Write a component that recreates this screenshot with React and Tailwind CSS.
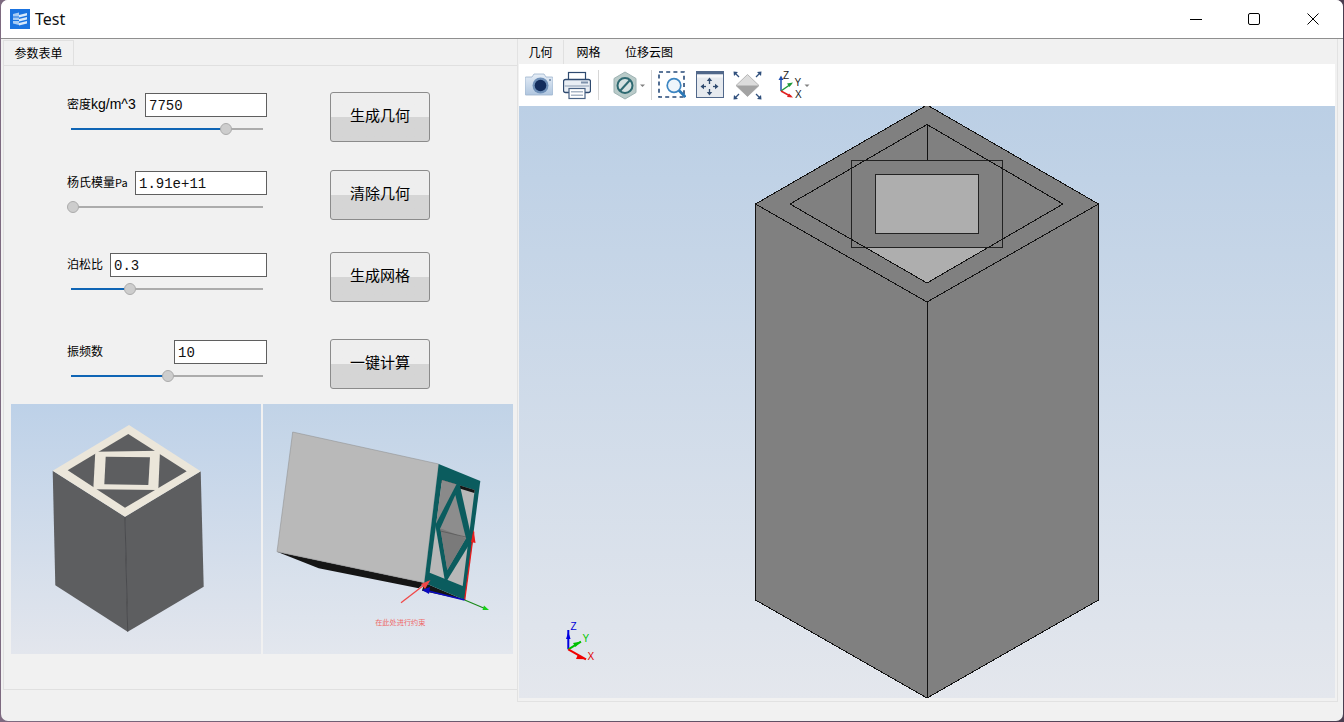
import React from "react";

const cjk = { fontFamily: '"Noto Sans CJK SC", "Liberation Sans", sans-serif' };
const latin = { fontFamily: '"Liberation Sans", sans-serif' };

function Slider({ pct }) {
  return (
    <div className="relative mt-[6px] ml-[4px] h-[12px] w-[192px]">
      <div className="absolute left-0 top-[5px] h-[2px] w-full bg-[#acacac]" />
      <div className="absolute left-0 top-[5px] h-[2px] bg-[#0f65b5]" style={{ width: `${pct}px` }} />
      <div
        className="absolute top-0 h-[12px] w-[12px] rounded-full border border-[#acacac] bg-[#cdcdcd]"
        style={{ left: `${pct - 6}px` }}
      />
    </div>
  );
}

function Row({ label, inputW, value, pct, button, mt }) {
  return (
    <div className={`flex pl-[63px] ${mt}`}>
      <div className="mt-[1px] w-[200px]">
        <div className="flex h-[24px] items-center justify-between">
          <span className="pb-[2px] text-[12px] leading-[16px] text-black" style={cjk}>
            {label}
          </span>
          <div
            className="flex h-[24px] items-center border border-[#5f5f5f] bg-white pt-[2px] pl-[3px] text-[14px] text-[#111]"
            style={{ width: inputW, fontFamily: '"Liberation Mono", monospace' }}
          >
            {value}
          </div>
        </div>
        <Slider pct={pct} />
      </div>
      <div
        className="ml-[63px] flex h-[50px] w-[100px] items-center justify-center rounded-[3px] border border-[#8b8b8b] bg-linear-to-b from-[#eeeeee] from-50% to-[#d5d5d5] to-50% pb-[3px] text-[15px] text-black"
        style={cjk}
      >
        {button}
      </div>
    </div>
  );
}

function Thumb1() {
  return (
    <svg viewBox="11 404 250 250" className="block h-full w-full">
      <polygon points="52.7,470.7 125,516.7 127.7,631.7 55.3,585.3" fill="#5d5e60" />
      <polygon points="125,516.7 200.7,471.3 203.7,586.7 127.7,631.7" fill="#5d5e60" />
      <line x1="125" y1="516.7" x2="127.7" y2="631.7" stroke="#3d3e40" strokeWidth="0.8" />
      <polygon points="129,425 200.7,471.3 125,516.7 52.7,470.7" fill="#ebe6da" />
      <polygon points="128.3,434 186.7,471.3 125,507.7 67.7,470.3" fill="#5d5e60" />
      <polygon points="95.3,451.7 160,450.7 158.3,490 93.3,489.3" fill="#ebe6da" />
      <polygon points="105.7,456.7 150,457.3 148.3,485 104.3,484.3" fill="#5d5e60" />
    </svg>
  );
}

function Thumb2() {
  return (
    <svg viewBox="263 404 250 250" className="block h-full w-full">
      <polygon points="277,551.7 318.7,568.3 418.7,588.3 424.3,582.7" fill="#151515" />
      <polygon points="292.7,432 438.7,464 424.3,582.7 277,551.7" fill="#b9b9b9" stroke="#8a8a8a" strokeWidth="0.5" />
      <polygon points="424.3,582.7 464.7,600 422,590.7" fill="#151515" />
      <polygon points="438.7,464 480.3,481 464.7,600 424.3,582.7" fill="#0b5c5e" />
      <polygon points="442,480 474.7,490 462.7,586 429.7,572.7" fill="#b8b8b8" />
      <polygon points="442,480 474.7,490 474.3,493 441.6,483" fill="#151515" />
      <polygon points="442,480 458.7,485 436,525 429.7,572.7" fill="#8a8a8a" />
      <polygon points="458.7,480 472,540 445.3,583.3 435.3,525" fill="#0b5c5e" />
      <polygon points="455.3,495 466,538.3 447.3,570 440.3,528.3" fill="#8d8d8d" />
      <polygon points="440.3,528.3 466,538.3 447.3,570" fill="#7a7a7a" />
      <line x1="440.3" y1="531" x2="466" y2="537" stroke="#444" strokeWidth="0.5" />
      <line x1="464.7" y1="600" x2="473.7" y2="531.7" stroke="#e81c1c" strokeWidth="1.3" />
      <polygon points="473.7,530 471,542 475.5,543" fill="#e81c1c" />
      <line x1="464.7" y1="600" x2="424" y2="590" stroke="#0a0ac0" strokeWidth="1.6" />
      <polygon points="422,590 430,587 429,594" fill="#0a0ac0" />
      <line x1="464.7" y1="600" x2="486" y2="609" stroke="#1a8a1a" strokeWidth="1.2" />
      <polygon points="489,610 484,605.5 482.5,610" fill="#18d018" />
      <line x1="401" y1="602.7" x2="428" y2="582" stroke="#f04848" strokeWidth="1.3" />
      <polygon points="430.5,580 421,584 425,589" fill="#f04848" />
      <text x="400.3" y="625" textAnchor="middle" fontSize="7.2" fill="#ee6a6a" style={cjk}>在此处进行约束</text>
    </svg>
  );
}

function Model() {
  return (
    <svg viewBox="519 106 816 592" className="block h-full w-full">
      <g stroke="#111" strokeWidth="1" shapeRendering="crispEdges">
        <polygon points="755.5,204 927,302 927,698 755.5,600" fill="#808080" />
        <polygon points="927,302 1098.5,204 1098.5,600 927,698" fill="#808080" />
        <polygon points="927,105 1098.5,204 927,302 755.5,204" fill="#808080" />
      </g>
      <polygon points="865,247 989,247 927,283" fill="#aeaeae" />
      <line x1="927" y1="124.5" x2="927" y2="160" stroke="#111" strokeWidth="1" shapeRendering="crispEdges" />
      <rect x="851.5" y="160.5" width="151" height="87" fill="#808080" stroke="#222" strokeWidth="1" shapeRendering="crispEdges" />
      <polygon points="927,124.5 1063,204 927,283 790,204" fill="none" stroke="#111" strokeWidth="1" shapeRendering="crispEdges" />
      <rect x="875.5" y="174.5" width="103" height="59" fill="#aeaeae" stroke="#222" strokeWidth="1" shapeRendering="crispEdges" />
      <line x1="568.3" y1="649.3" x2="568.3" y2="630" stroke="#0000e0" strokeWidth="2" />
      <polygon points="568.3,632 566,639 570.6,639" fill="#0000e0" />
      <line x1="568.3" y1="649.3" x2="581" y2="641.7" stroke="#00c000" strokeWidth="2" />
      <polygon points="581,641.5 573,643 575.5,647" fill="#00c000" />
      <line x1="568.3" y1="649.3" x2="586" y2="659.3" stroke="#f00000" strokeWidth="2" />
      <polygon points="586,659.3 578,654.5 576,659" fill="#f00000" />
      <text x="570.5" y="630" fontSize="10" fill="#0000d8" style={latin}>Z</text>
      <text x="582.5" y="642" fontSize="10" fill="#00c800" style={latin}>Y</text>
      <text x="587.5" y="660" fontSize="10" fill="#e00000" style={latin}>X</text>
    </svg>
  );
}

function Camera() {
  return (
    <svg viewBox="525 70 28 30" className="ml-[6px] h-[30px] w-[28px]">
      <defs>
        <linearGradient id="cam" x1="0" y1="0" x2="0" y2="1">
          <stop offset="0" stopColor="#e6eef7" />
          <stop offset="1" stopColor="#b0c6df" />
        </linearGradient>
      </defs>
      <path d="M526 77h6l2-3h10l2 3h6a1 1 0 0 1 1 1V94a1 1 0 0 1-1 1H526a1 1 0 0 1-1-1V78a1 1 0 0 1 1-1z" fill="url(#cam)" stroke="#9db2cb" strokeWidth="0.8" />
      <circle cx="540.5" cy="85.5" r="8" fill="#6f90b8" />
      <circle cx="540.5" cy="85.5" r="5.8" fill="#122c5c" />
      <circle cx="550" cy="80" r="1" fill="#6c84a5" />
    </svg>
  );
}

function Printer() {
  return (
    <svg viewBox="563 70 28 30" className="ml-[10px] h-[30px] w-[28px]">
      <rect x="568.5" y="72.5" width="17" height="8" fill="#fff" stroke="#2f4a6f" strokeWidth="1.2" />
      <rect x="563.5" y="79.5" width="27" height="13" rx="2" fill="#e9eef4" stroke="#2f4a6f" strokeWidth="1.3" />
      <rect x="564.5" y="85" width="25" height="2" fill="#b9c4d2" />
      <rect x="581" y="81.5" width="7" height="2" fill="#7f92ab" />
      <rect x="569" y="88.5" width="16" height="10" fill="#fff" stroke="#4a6385" strokeWidth="1.2" />
      <rect x="571" y="91" width="12" height="1.5" fill="#a9b6c6" />
      <rect x="571" y="94.5" width="12" height="1.5" fill="#a9b6c6" />
    </svg>
  );
}

function Sep() {
  return <div className="h-[30px] w-px bg-[#d6d6d6]" />;
}

function Arrow() {
  return <polygon points="0,0 5,0 2.5,2.5" fill="#808080" />;
}

function Hex() {
  return (
    <svg viewBox="613 70 33 30" className="ml-[14px] h-[30px] w-[33px]">
      <polygon points="625,72 636,78.5 636,92.5 625,99 614,92.5 614,78.5" fill="#b9cbc9" stroke="#9db2b2" strokeWidth="1" />
      <circle cx="625" cy="85.5" r="7.5" fill="#d7e2e2" stroke="#2f6a72" strokeWidth="2" />
      <line x1="620" y1="91" x2="630" y2="80" stroke="#2f6a72" strokeWidth="2" />
      <g transform="translate(640 84.5)"><Arrow /></g>
    </svg>
  );
}

function ZoomBox() {
  return (
    <svg viewBox="658 70 28 30" className="ml-[6px] h-[30px] w-[28px]">
      <rect x="659" y="72" width="25" height="25" fill="none" stroke="#274a78" strokeWidth="1.6" strokeDasharray="4 3.2" />
      <circle cx="674" cy="85.5" r="6.8" fill="#eef5fb" stroke="#3d86c2" strokeWidth="1.7" />
      <line x1="679" y1="90.5" x2="685.5" y2="97" stroke="#2a78b8" strokeWidth="2.8" />
    </svg>
  );
}

function PanBox() {
  const c = "#2f4a6f";
  return (
    <svg viewBox="696 70 28 30" className="ml-[10px] h-[30px] w-[28px]">
      <rect x="696.5" y="71.5" width="27" height="26" fill="#e6eaef" stroke="#51688a" strokeWidth="1" />
      <rect x="696" y="71" width="28" height="3.5" fill="#51688a" />
      <rect x="697" y="74.5" width="26" height="3" fill="#f6f7f9" />
      <g stroke={c} strokeWidth="1.3">
        <line x1="709.5" y1="80" x2="709.5" y2="84" />
        <line x1="709.5" y1="89" x2="709.5" y2="93" />
        <line x1="702" y1="86.5" x2="706" y2="86.5" />
        <line x1="713" y1="86.5" x2="717" y2="86.5" />
      </g>
      <g fill={c}>
        <polygon points="709.5,77.5 706.8,81 712.2,81" />
        <polygon points="709.5,95.5 706.8,92 712.2,92" />
        <polygon points="700.5,86.5 704,83.8 704,89.2" />
        <polygon points="718.5,86.5 715,83.8 715,89.2" />
      </g>
    </svg>
  );
}

function Fit() {
  const c = "#2f4f7c";
  return (
    <svg viewBox="733 70 29 30" className="ml-[9px] h-[30px] w-[29px]">
      <polygon points="747.5,74.5 759,85.5 747.5,96.5 736,85.5" fill="#dcdcdc" stroke="#a8a8a8" strokeWidth="0.8" />
      <polygon points="736,85.5 759,85.5 747.5,96.5" fill="#a3a3a3" />
      <g stroke={c} strokeWidth="1.3">
        <line x1="735" y1="73" x2="739" y2="77" />
        <line x1="760" y1="73" x2="756" y2="77" />
        <line x1="735" y1="98" x2="739" y2="94" />
        <line x1="760" y1="98" x2="756" y2="94" />
      </g>
      <g fill={c}>
        <polygon points="733.5,71.5 738,72 734,76" />
        <polygon points="761.5,71.5 757,72 761,76" />
        <polygon points="733.5,99.5 738,99 734,95" />
        <polygon points="761.5,99.5 757,99 761,95" />
      </g>
    </svg>
  );
}

function Axes() {
  return (
    <svg viewBox="778 70 32 30" className="ml-[16px] h-[30px] w-[32px] overflow-visible">
      <line x1="781" y1="91" x2="781" y2="78" stroke="#2050b0" strokeWidth="1.5" />
      <polygon points="781,75.5 778.5,80 783.5,80" fill="#2050b0" />
      <line x1="781" y1="91" x2="791" y2="84" stroke="#1f9a3a" strokeWidth="1.5" />
      <polygon points="793,82.5 787,83.5 789.5,87" fill="#1f9a3a" />
      <line x1="781" y1="91" x2="791" y2="96.5" stroke="#e02020" strokeWidth="1.5" />
      <polygon points="793,97.5 787,97 789,93.5" fill="#e02020" />
      <g fontSize="10" fill="#222" style={latin}>
        <text x="783" y="78.5">Z</text>
        <text x="794.5" y="86">Y</text>
        <text x="795" y="98">X</text>
      </g>
      <g transform="translate(804.5 84.5)"><Arrow /></g>
    </svg>
  );
}

export default function App() {
  return (
    <div className="h-[722px] w-[1344px] overflow-hidden bg-linear-to-r from-[#7d6a80] to-[#4a3d50]">
      <div className="ml-px flex h-[721px] w-[1342px] flex-col overflow-hidden rounded-[7px] bg-[#f1f1f1]">
        {/* title bar */}
        <div className="flex h-[39px] shrink-0 items-center border-b border-[#8f8f8f] bg-white pl-[9px]">
          <svg viewBox="0 0 20 20" className="h-[20px] w-[20px]">
            <rect width="20" height="20" fill="#1a73e0" />
            <g fill="#d8e9fb">
              <polygon points="3,5 9,3.5 9,16 3,14.5" opacity="0.75" />
              <polygon points="9,6 17,4 17,6.5 9,8.5" />
              <polygon points="9,10 17,8 17,10.5 9,12.5" />
              <polygon points="9,14 17,12 17,14.5 9,16.5" />
            </g>
            <g fill="#1a73e0">
              <rect x="3" y="7.5" width="6" height="1" />
              <rect x="3" y="11" width="6" height="1" />
            </g>
          </svg>
          <span className="ml-[5px] text-[16px] text-[#111]" style={{ fontFamily: '"Noto Sans", sans-serif' }}>Test</span>
          <div className="ml-auto mr-px flex h-full">
            <div className="flex w-[58px] items-center justify-center">
              <div className="h-px w-[12px] bg-black" />
            </div>
            <div className="flex w-[58px] items-center justify-center">
              <div className="h-[12px] w-[12px] rounded-[2px] border border-black" />
            </div>
            <div className="flex w-[59px] items-center justify-center">
              <svg viewBox="0 0 12 12" className="h-[12px] w-[12px]">
                <path d="M0.5 0.5L11.5 11.5M11.5 0.5L0.5 11.5" stroke="#000" strokeWidth="1" fill="none" />
              </svg>
            </div>
          </div>
        </div>

        {/* body */}
        <div className="flex min-h-0 flex-1">
          {/* left panel */}
          <div className="ml-[2px] flex h-[651px] w-[514px] flex-col border-b border-[#e0e0e0]">
            <div className="mt-px flex h-[25px] w-[71px] items-center justify-center border border-b-0 border-[#e0e0e0] text-[12px] text-black" style={cjk}>
              参数表单
            </div>
            <div className="flex-1 border-t border-l border-[#e0e0e0] pt-[26px]">
              <Row
                label={<>密度<span className="text-[14px]" style={latin}>kg/m^3</span></>}
                inputW="122px"
                value="7750"
                pct={155}
                button="生成几何"
                mt=""
              />
              <Row
                label={<>杨氏模量<span className="text-[11px]">Pa</span></>}
                inputW="132px"
                value="1.91e+11"
                pct={2}
                button="清除几何"
                mt="mt-[28px]"
              />
              <Row label="泊松比" inputW="157px" value="0.3" pct={59} button="生成网格" mt="mt-[32px]" />
              <Row label="振频数" inputW="93px" value="10" pct={97} button="一键计算" mt="mt-[37px]" />
              <div className="mt-[15px] flex gap-[2px] pl-[7px]">
                <div className="h-[250px] w-[250px] bg-linear-to-b from-[#bdd1e8] to-[#e3e6ed]"><Thumb1 /></div>
                <div className="h-[250px] w-[250px] bg-linear-to-b from-[#c1d3e7] to-[#e3e7ee]"><Thumb2 /></div>
              </div>
            </div>
          </div>

          {/* right panel */}
          <div className="flex h-[663px] w-[821px] flex-col border-x border-b border-[#e2e2e2]">
            <div className="mt-px flex h-[24px] shrink-0 items-center text-[12px] text-black" style={cjk}>
              <div className="flex h-full w-[46px] items-center justify-center border-r border-[#e0e0e0]">几何</div>
              <div className="ml-[12px] w-[25px] text-center">网格</div>
              <div className="ml-[24px]">位移云图</div>
            </div>
            <div className="ml-px flex h-[42px] w-[816px] shrink-0 items-start bg-white pt-[6px]">
              <Camera />
              <Printer />
              <div className="ml-[7px]"><Sep /></div>
              <Hex />
              <div className="ml-[5px]"><Sep /></div>
              <ZoomBox />
              <PanBox />
              <Fit />
              <Axes />
            </div>
            <div className="ml-px h-[592px] w-[816px] shrink-0 bg-linear-to-b from-[#bbcfe5] to-[#e4e7ed]">
              <Model />
            </div>
          </div>
        </div>
      </div>
    </div>
  );
}
